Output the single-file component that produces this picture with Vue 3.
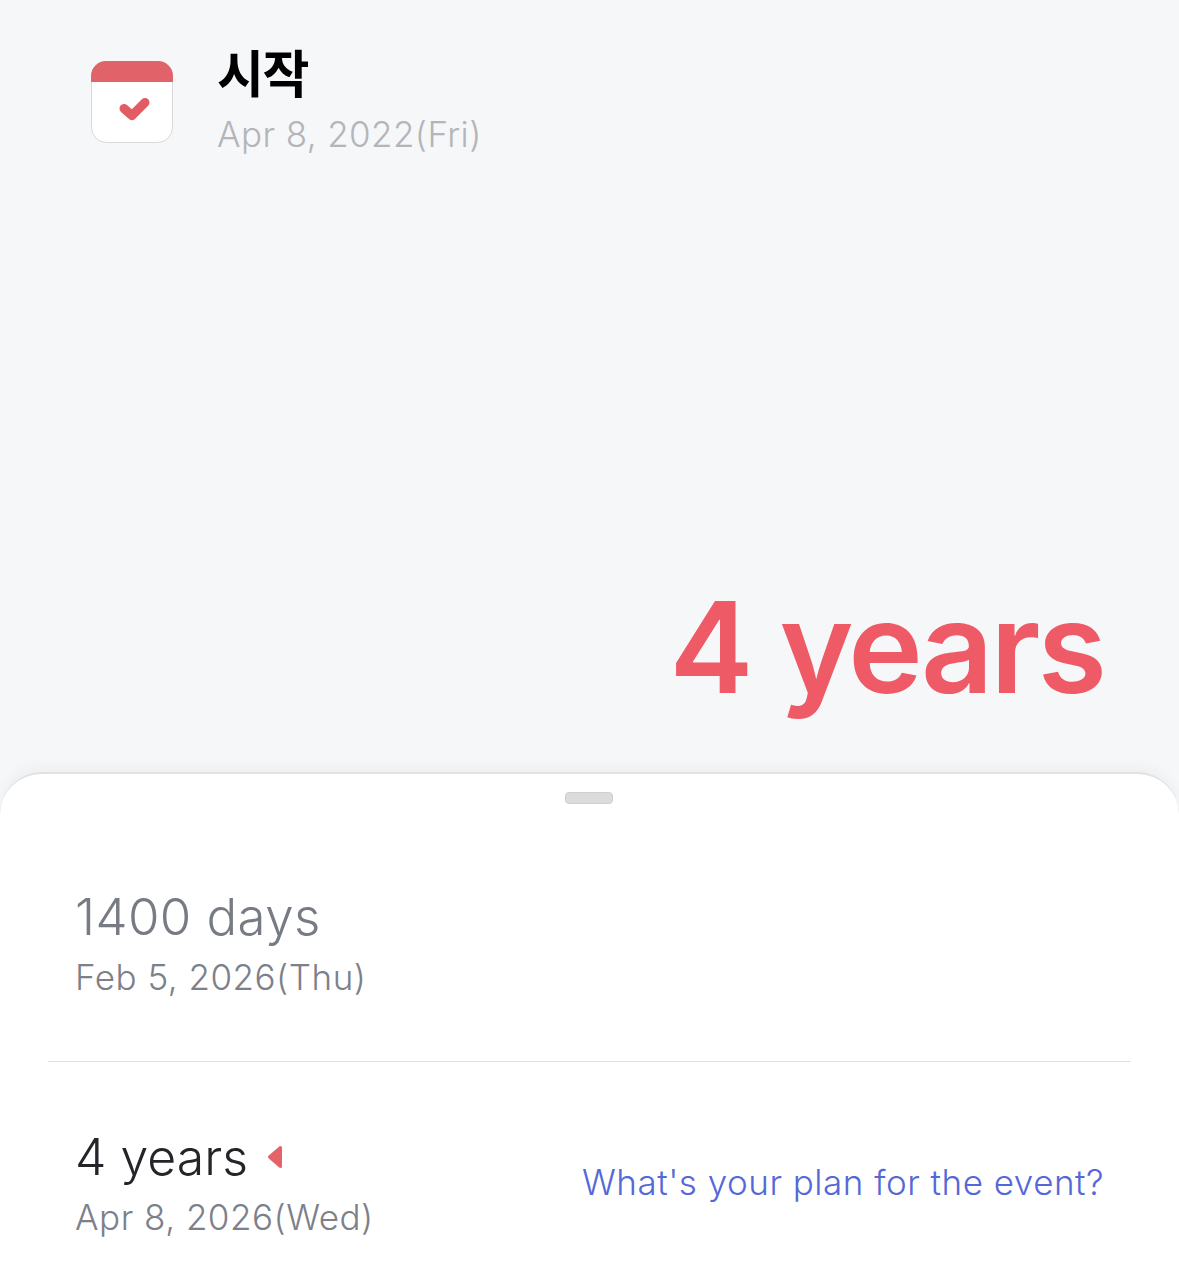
<template>
  <div class="page">
    <section class="top">
      <div class="event">
        <svg class="cal" viewBox="0 0 82 82" width="82" height="82">
          <rect x="0.5" y="0.5" width="81" height="81" rx="15" fill="#fff" stroke="#d9d9dc" />
          <path d="M0 21V15A15 15 0 0 1 15 0H67A15 15 0 0 1 82 15V21Z" fill="#e16268" />
          <path d="M33 47.500L41 54.500L54 41.500" fill="none" stroke="#e25c64" stroke-width="9" stroke-linecap="round" stroke-linejoin="round" />
        </svg>
        <div class="event-text">
          <h1>시작</h1>
          <p>Apr 8, 2022(Fri)</p>
        </div>
      </div>
      <div class="big">4 years</div>
    </section>

    <section class="sheet">
      <div class="handle"></div>
      <div class="row first">
        <div class="count muted">1400 days</div>
        <div class="date">Feb 5, 2026(Thu)</div>
      </div>
      <div class="row second">
        <div>
          <div class="count">
            4 years
            <svg class="marker" viewBox="0 0 16 24" width="16" height="24">
              <path d="M13.500 2.500L2.500 12L13.500 21.500Z" fill="#e46369" stroke="#e46369" stroke-width="3" stroke-linejoin="round" />
            </svg>
          </div>
          <div class="date">Apr 8, 2026(Wed)</div>
        </div>
        <a class="plan">What's your plan for the event?</a>
      </div>
    </section>
  </div>
</template>

<script setup>
</script>

<style>
body {
  background: #fff;
}
</style>

<style scoped>
.page {
  width: 1179px;
  height: 1280px;
  overflow: hidden;
  background: #f6f7f9;
  font-family: Inter, "Noto Sans CJK KR", sans-serif;
}

.top {
  height: 772px;
  box-sizing: border-box;
  padding: 41px 76px 0 91px;
  display: flex;
  flex-direction: column;
  justify-content: space-between;
}

.event {
  display: flex;
  gap: 44px;
}

.cal {
  margin-top: 20px;
  flex: none;
}

.event-text h1 {
  margin: 0;
  font-family: "Noto Sans CJK KR", sans-serif;
  font-size: 51px;
  font-weight: 700;
  line-height: 60px;
  color: #000;
  letter-spacing: -1.5px;
}

.event-text p {
  margin: 11px 0 0;
  font-size: 35px;
  letter-spacing: 0.4px;
  line-height: 44px;
  font-weight: 300;
  color: #b3b5b9;
}

.big {
  text-align: right;
  font-size: 126px;
  font-weight: 600;
  letter-spacing: -2.900px;
  line-height: 150px;
  margin-bottom: 50px;
  margin-right: -1px;
  color: #ef5a67;
}

.sheet {
  height: 508px;
  box-sizing: border-box;
  background: #fff;
  border-radius: 42px 42px 0 0;
  border-top: 2px solid #e0e1e3;
  box-shadow: 0 -6px 14px rgba(0, 0, 0, 0.035);
  padding: 18px 48px 0;
}

.handle {
  width: 48px;
  height: 12px;
  box-sizing: border-box;
  margin-left: 517px;
  border-radius: 4px;
  border: 1px solid #cfcfcf;
  background: #dcdcdc;
}

.row {
  padding: 0 28px;
}

.first {
  padding-top: 83px;
  padding-bottom: 62px;
  border-bottom: 1px solid #dedfe1;
}

.second {
  padding-top: 65px;
  display: flex;
  justify-content: space-between;
  align-items: flex-end;
}

.count {
  font-size: 50px;
  font-weight: 300;
  line-height: 60px;
  color: #232528;
  display: flex;
  align-items: center;
  gap: 19px;
  margin-left: -1px;
}

.count.muted {
  color: #777b84;
  font-size: 51px;
  letter-spacing: 0.4px;
}

.marker {
  flex: none;
}

.date {
  margin-top: 8px;
  font-size: 35px;
  letter-spacing: 0.5px;
  line-height: 44px;
  font-weight: 300;
  color: #7c808a;
  margin-left: -1px;
}

.plan {
  font-size: 35px;
  letter-spacing: 0.5px;
  line-height: 44px;
  font-weight: 300;
  color: #5468d8;
  margin-bottom: 35px;
  margin-right: -1px;
}
</style>
